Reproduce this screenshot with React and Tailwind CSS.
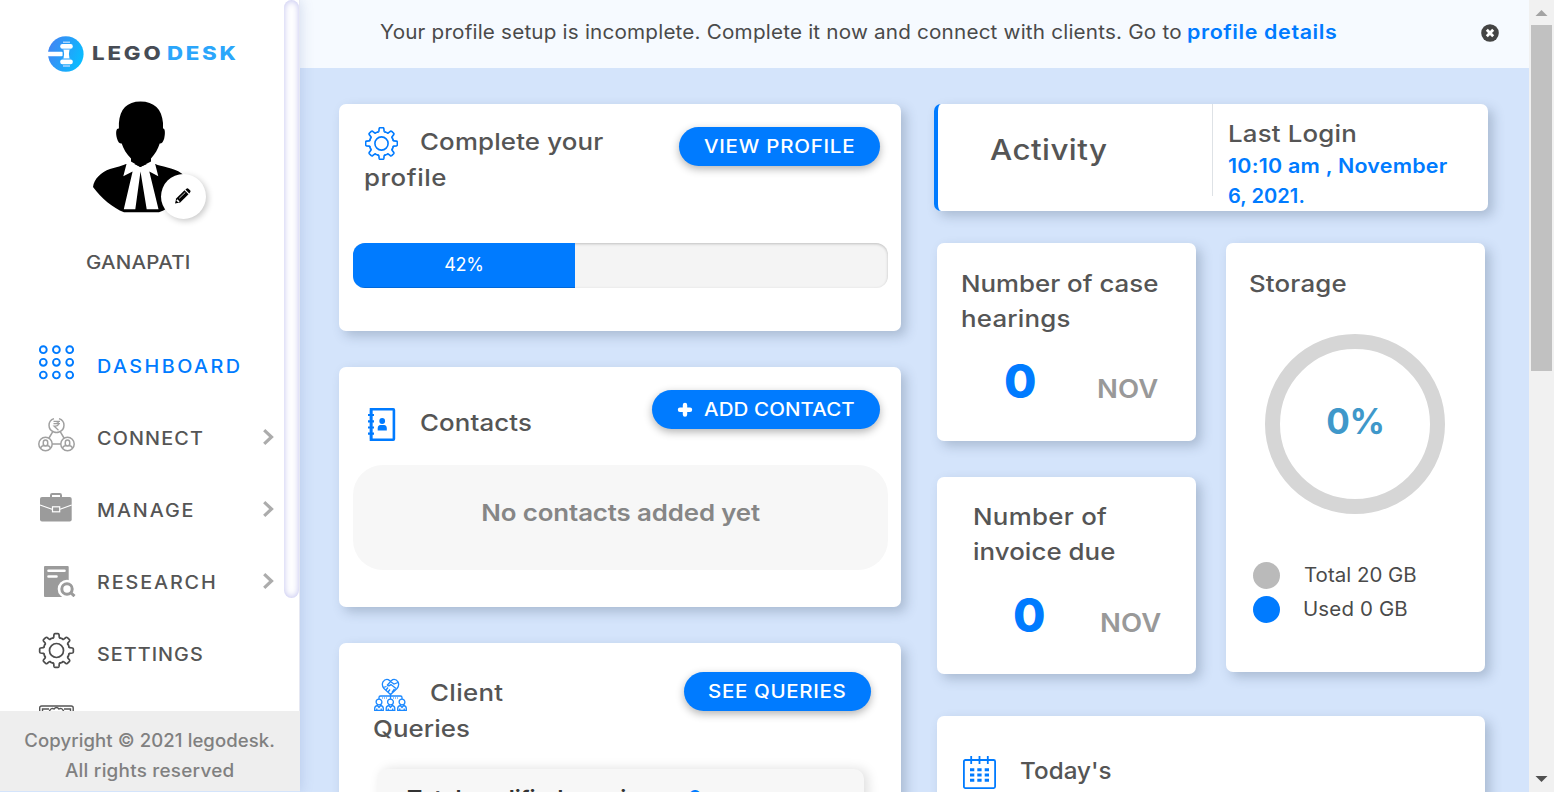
import React from "react";

const gearPath = (cx, cy, r, ri) => {
  const pts = [];
  const at = (deg, rad) => {
    const a = ((deg - 90) * Math.PI) / 180;
    return `${(cx + rad * Math.cos(a)).toFixed(2)} ${(cy + rad * Math.sin(a)).toFixed(2)}`;
  };
  for (let k = 0; k < 8; k++) {
    const c = k * 45;
    pts.push(`${k ? "L" : "M"}${at(c - 12, ri + 0.6)}`);
    pts.push(`L${at(c - 9, r - 0.8)} Q${at(c - 8, r)} ${at(c - 5, r)}`);
    pts.push(`L${at(c + 5, r)} Q${at(c + 8, r)} ${at(c + 9, r - 0.8)}`);
    pts.push(`L${at(c + 12, ri + 0.6)} Q${at(c + 16, ri - 0.6)} ${at(c + 19, ri + 0.3)}`);
    pts.push(`Q${at(c + 22.5, ri - 0.2)} ${at(c + 26, ri + 0.3)} Q${at(c + 29, ri - 0.6)} ${at(c + 33, ri + 0.6)}`);
  }
  return pts.join(" ") + "Z";
};

const Gear = ({ size, r, ri, hole, stroke, className }) => (
  <svg width={size} height={size} className={className} fill="none" stroke="currentColor" strokeWidth={stroke} strokeLinejoin="round">
    <path d={gearPath(size / 2, size / 2, r, ri)} />
    <circle cx={size / 2} cy={size / 2} r={hole} />
  </svg>
);

const LogoMark = () => (
  <svg width="36" height="36" viewBox="0 0 36 36" className="shrink-0">
    <defs>
      <linearGradient id="lg" x1="0" x2="1" y1="0.2" y2="0.6">
        <stop offset="0" stopColor="#4383f3" />
        <stop offset="1" stopColor="#08bdff" />
      </linearGradient>
    </defs>
    <circle cx="17.8" cy="18" r="17.8" fill="url(#lg)" />
    <path d="M0 15.7h13.6a1 1 0 0 1 1 1v2.6a1 1 0 0 1-1 1H0z" fill="#fff" />
    <rect x="12.2" y="8" width="12.6" height="4.8" rx="2.2" fill="#fff" />
    <rect x="12.2" y="23.4" width="12.6" height="4.8" rx="2.2" fill="#fff" />
    <path d="M15.5 13.6h6l-.6 4.4.6 4.6h-6l.6-4.6z" fill="#fff" />
    <path d="M15 6.3h7M15 30h7" stroke="#a9d5ff" strokeWidth="1.5" />
    <path d="M14.5 13.2h8M14.5 23h8" stroke="#8cc8ff" strokeWidth=".7" />
  </svg>
);

const Avatar = () => (
  <svg width="96" height="112" viewBox="0 0 96 112">
    <path d="M33 63C26 66 22 66.500 17 68C8 71 1 78 0 86C8 97 20 107 31 111.300H66C78 107 88 97 95 86C94 80 92 75 88.700 72.500C80 66 68 66 62.300 63z" />
    <path d="M35.300 60 47.300 66 60 60.300 62.300 63.500 65.300 75.300 56.300 70.500 65.500 108.300H53.700L47.500 70.500 42.300 108.300H30.800L39.600 70.500 30.300 75.300 33.500 63z" fill="#fff" />
    <path d="M47.500.4C34 .4 27 8 25.900 22V27.500C23 27 22.500 32 24 37.500C25 41.500 26.800 42.700 28.700 42.500C30.500 48 33.500 53 38 57.500V60.500L47.300 66 58 60.500V57.500C62 53 65 48 66.700 42.500C68.500 42.700 70 41.500 71.200 37.500C72.500 32 72 27 70 27.500V22C69 8 61 .4 47.500.4z" />
  </svg>
);

const Pencil = () => (
  <svg width="16" height="16" viewBox="0 0 16 16" className="-mt-[2px] -ml-[1px]">
    <path d="M0 15.500 1.200 10.600 9.500 2.300 13.500 6.300 5.200 14.400z" />
    <path d="M10.400 1.500 11.800.4Q12.700 0 13.400.7L15.300 2.600Q15.900 3.300 15.300 4.100L14.300 5.400z" />
    <path d="M1.900 11.900 4 14" stroke="#fff" strokeWidth="1.600" />
    <path d="M4.200 10.300 10.300 4.400" stroke="#fff" strokeWidth=".8" />
  </svg>
);

const DashboardIcon = () => (
  <svg width="38" height="38" fill="none" stroke="#007bff" strokeWidth="1.900">
    {[6.7, 19.3, 32].map((y) => [5.3, 18.4, 31.700].map((x) => <circle key={x + y * 50} cx={x} cy={y} r="3.400" />))}
  </svg>
);

const Person = ({ x, y }) => (
  <g transform={`translate(${x} ${y})`}>
    <path d="M-2.200 1.500V-1.500a2.200 2.200 0 0 1 4.400 0V1.500M-4.600 4.800V3.600Q-4 2.200-1.300 1.700Q0 3 1.300 1.700Q4 2.200 4.600 3.600V4.800" />
  </g>
);

const ConnectIcon = () => (
  <svg width="38" height="38" fill="none" stroke="#a0a0a0" strokeWidth="1.500">
    <path d="M16 3.600A7 7 0 0 0 16 17M21 3.600A7 7 0 0 1 21 17M16 17Q18.500 18 21 17" />
    <path d="M15.500 6.300h6.500M15.500 8.700h6.500M15.500 6.300h2q3 .2 3 2.400t-3 2.300h-1.500l4.500 4.300" strokeWidth="1.200" />
    <circle cx="7.500" cy="29" r="6.700" />
    <circle cx="29.500" cy="29" r="6.700" />
    <path d="M14.200 29h8.600M11 23 14.800 16.600M26 23 22.200 16.600" />
    <Person x={7.500} y={28.700} />
    <Person x={29.500} y={28.700} />
  </svg>
);

const ManageIcon = () => (
  <svg width="38" height="38">
    <path d="M13 11V8.200Q13 7 14.200 7H21.800Q23 7 23 8.200V11" fill="none" stroke="#9b9b9b" strokeWidth="2" />
    <rect x="2" y="10" width="31.700" height="24.500" rx="2" fill="#9b9b9b" />
    <path d="M2 18 14 22.300M22 22.300 33.700 18" stroke="#fff" strokeWidth="1.200" />
    <rect x="14.500" y="19.800" width="7.200" height="5" fill="#9b9b9b" stroke="#fff" strokeWidth="1.200" />
  </svg>
);

const ResearchIcon = () => (
  <svg width="38" height="38">
    <path d="M7 7H29.700Q30.700 7 30.700 8V38H7Q6 38 6 37V8Q6 7 7 7z" fill="#9b9b9b" />
    <path d="M10.500 11.700H26.500M10.500 17.500H18.500" stroke="#fff" strokeWidth="2.600" strokeLinecap="round" />
    <circle cx="29" cy="30" r="9.300" fill="#fff" />
    <path d="M29 39H39V29z" fill="#fff" />
    <circle cx="29" cy="30" r="5.200" fill="none" stroke="#9b9b9b" strokeWidth="3" />
    <path d="M32.500 33.500 36.500 37.200" stroke="#9b9b9b" strokeWidth="3" />
  </svg>
);

const CertificateIcon = () => (
  <svg width="38" height="38" fill="none" stroke="#555" strokeWidth="1.400">
    <rect x="1.700" y="3" width="33.500" height="26" rx="2" />
    <path d="M4.500 9V6H11M32.500 9V6H26M11 9Q13 4 16 6Q18.500 3 21 6Q24 4 26 9" />
  </svg>
);

const nav = [
  { label: "DASHBOARD", icon: <DashboardIcon />, text: "text-[#007bff] tracking-[2.200px]" },
  { label: "CONNECT", icon: <ConnectIcon />, arrow: true, text: "text-[#555] tracking-[1.030px]" },
  { label: "MANAGE", icon: <ManageIcon />, arrow: true, text: "text-[#555] tracking-[1.700px]" },
  { label: "RESEARCH", icon: <ResearchIcon />, arrow: true, text: "text-[#555] tracking-[1.700px]" },
  { label: "SETTINGS", icon: <Gear size={37} r={16.900} ri={12.900} hole={7} stroke={1.700} />, text: "text-[#555] tracking-[0.930px]" },
];

const Sidebar = () => (
  <aside className="relative z-10 flex h-[792px] w-[300px] shrink-0 flex-col bg-white shadow-[1px_0_12px_rgba(60,90,160,0.18)]">
    <div className="flex h-[711px] overflow-hidden border-r border-[#e6e8f2]">
      <div className="flex w-[284px] shrink-0 flex-col">
        <div className="mt-[36px] flex h-[36px] items-center pl-[48px]">
          <LogoMark />
          <div className="-mt-[2px] ml-[8px] flex text-[18.500px] font-extrabold leading-5">
            <span className="w-[75px] origin-left scale-x-120 tracking-[2.400px] text-[#474c55]">LEGO</span>
            <span className="origin-left scale-x-120 tracking-[2.270px] text-[#2ba6fb]">DESK</span>
          </div>
        </div>
        <div className="mt-[29px] flex h-[120px] pl-[93px]">
          <Avatar />
          <div className="-ml-[28px] mt-[73px] flex h-[45px] w-[45px] shrink-0 items-center justify-center rounded-full bg-white shadow-[2px_2px_6px_rgba(0,0,0,0.22)]">
            <Pencil />
          </div>
        </div>
        <div className="mt-[29px] h-[30px] pl-[86px] text-[18px] font-medium leading-[30px] text-[#555]">
          <span className="inline-block origin-left scale-x-114 tracking-[0.200px]">GANAPATI</span>
        </div>
        <nav className="mt-[52px] flex flex-col">
          {nav.map((n) => (
            <div key={n.label} className="flex h-[72px] items-center pl-[38px] pr-[10px]">
              <div className="mb-[8px] w-[38px] shrink-0 text-[#4d4d4d]">{n.icon}</div>
              <span className={`ml-[21px] origin-left scale-x-110 text-[18px] font-medium ${n.text}`}>{n.label}</span>
              {n.arrow && (
                <svg width="11" height="16" className="mb-[3px] ml-auto shrink-0" fill="none" stroke="#acacac" strokeWidth="3.200">
                  <path d="M1.200 1.200 8.500 8 1.200 14.800" />
                </svg>
              )}
            </div>
          ))}
          <div className="mt-[13px] pl-[38px]"><CertificateIcon /></div>
        </nav>
      </div>
      <div className="h-[598px] w-[15px] shrink-0 rounded-[8px] bg-white shadow-[inset_0_0_7px_#bfbfee]" />
    </div>
    <footer className="flex h-[80px] flex-col items-center bg-[#eee] pt-[15px] text-[18px] font-medium leading-[30px] text-[#808080]">
      <div className="scale-x-103 tracking-[0.080px]">Copyright © 2021 legodesk.</div>
      <div className="scale-x-105 tracking-[0.220px]">All rights reserved</div>
    </footer>
    <div className="h-px bg-[#d4e4fb]" />
  </aside>
);

const card = "rounded-[7px] bg-white shadow-[5px_5px_12px_rgba(45,65,90,0.25)]";
const h = "origin-left scale-x-110 whitespace-nowrap text-[23.500px] font-medium text-[#555]";
const pill = "flex h-[39px] items-center rounded-full bg-[#007bff] whitespace-nowrap text-[18px] font-medium text-white shadow-[0_3px_8px_rgba(0,0,0,0.3)]";

const BookIcon = () => (
  <svg width="28" height="33" viewBox="0 0 28 33">
    <rect x="3.200" y="1.300" width="22.700" height="30.400" rx=".6" fill="none" stroke="#007bff" strokeWidth="2.600" />
    <path d="M3 0V33" stroke="#007bff" strokeWidth="2.600" />
    <path d="M0 7H6M0 13.300H6M0 19.500H6M0 25.700H6" stroke="#007bff" strokeWidth="2.200" />
    <circle cx="14.200" cy="13" r="2.900" fill="#007bff" />
    <path d="M9.700 22.500V20.500Q9.700 17 12.500 17H16Q18.800 17 18.800 20.500V22.500z" fill="#007bff" />
  </svg>
);

const ClientsIcon = () => (
  <svg width="33" height="33" viewBox="0 0 33 33" className="mt-[3px]" fill="none" stroke="#1a88ff" strokeWidth="1.300">
    <path d="M16.500 16.500 10 10.500Q7.300 7.300 9 3.800Q11 .7 14.300 1.600L16.500 3.200 18.700 1.600Q22 .7 24 3.800Q25.700 7.300 23 10.500z" />
    <path d="M9 9.500 12.500 8.500M13 7.500 16.500 3.500 20 6 24 4.500M13 7.500Q15 8.500 17 6.500L22 10.500M12 12l2-2.500M14 14l2-2.500M18 14.500l2.500-3.500" />
    <path d="M16.500 16V21M5 21V19.500Q5 18 6.500 18H26.500Q28 18 28 19.500V21" />
    <path d="M8 20H14M19 20H25" strokeDasharray="1 1" strokeWidth="1.200" />
    {[5, 16.500, 28].map((x) => (
      <g key={x} transform={`translate(${x} 0)`}>
        <circle cx="0" cy="24" r="2.900" />
        <path d="M-4.300 32.300V30.500Q-4.300 28-1.600 27.500L0 29.500 1.600 27.500Q4.300 28 4.300 30.500V32.300zM-2.200 32V30.500M2.200 32V30.500" />
      </g>
    ))}
  </svg>
);

const CalendarIcon = () => (
  <svg width="33" height="33" viewBox="0 0 33 33" fill="none" stroke="#007bff">
    <rect x=".9" y="4" width="31.200" height="28.100" rx="1.500" strokeWidth="1.800" />
    <path d="M8.200 0V8M16.500 0V8M24.800 0V8" strokeWidth="1.800" />
    <path d="M7 13.800H11.300M14.300 13.800H18.600M21.700 13.800H26M7 19H11.300M14.300 19H18.600M21.700 19H26M7 24.200H11.300M14.300 24.200H18.600M21.700 24.200H26" strokeWidth="3" />
  </svg>
);

const LeftColumn = () => (
  <div className="flex w-[562px] shrink-0 flex-col gap-[36px]">
    <section className={`${card} h-[227px] shrink-0 pl-[14px] pr-[13px]`}>
      <div className="flex h-[139px] justify-between pl-[12px] pr-[8px]">
        <div className="pt-[20px] leading-[36px]">
          <div className="flex">
            <Gear size={33} r={15.900} ri={12} hole={6.600} stroke={1.600} className="mt-[3px] text-[#007bff]" />
            <span className={`${h} ml-[22px] tracking-[0.140px]`}>Complete your</span>
          </div>
          <div className={`${h} -ml-px tracking-[0.500px]`}>profile</div>
        </div>
        <button className={`${pill} mt-[23px] w-[201px] pl-[25px]`}>
          <span className="origin-left scale-x-114 tracking-[0.650px]">VIEW PROFILE</span>
        </button>
      </div>
      <div className="h-[45px] overflow-hidden rounded-[12px] bg-[#f4f4f4] shadow-[inset_0_1px_3px_rgba(0,0,0,0.22)]">
        <div className="flex h-full w-[222px] items-center justify-center bg-[#007bff] pb-[2px] text-[18px] tracking-[-0.300px] text-white shadow-[inset_0_-1px_0_rgba(0,0,0,0.15)]">42%</div>
      </div>
    </section>

    <section className={`${card} h-[240px] shrink-0 pl-[14px] pr-[13px]`}>
      <div className="flex h-[98px] justify-between pl-[15px] pr-[8px]">
        <div className="flex pt-[41px]">
          <BookIcon />
          <span className={`${h} -mt-[3px] ml-[24px] h-[36px] leading-[36px] tracking-[0.090px]`}>Contacts</span>
        </div>
        <button className={`${pill} mt-[23px] w-[228px] pl-[25px]`}>
          <svg width="16" height="16" className="mr-[11px]" stroke="#fff" strokeWidth="4.400" strokeLinecap="round">
            <path d="M8 3V12.600M3 7.800H13" />
          </svg>
          <span className="origin-left scale-x-114 tracking-[0.080px]">ADD CONTACT</span>
        </button>
      </div>
      <div className="flex h-[105px] justify-center rounded-[30px] bg-[#f7f7f7] pt-[30px]">
        <span className="scale-x-110 whitespace-nowrap text-[23.500px] font-semibold leading-[36px] tracking-[-0.120px] text-[#868686]">No contacts added yet</span>
      </div>
    </section>

    <section className={`${card} h-[260px] shrink-0 pl-[35px]`}>
      <div className="flex h-[126px] justify-between pr-[30px]">
        <div className="pt-[32px] leading-[36px]">
          <div className="flex">
            <ClientsIcon />
            <span className={`${h} ml-[23px] tracking-[0.300px]`}>Client</span>
          </div>
          <div className={`${h} -ml-px tracking-[0.050px]`}>Queries</div>
        </div>
        <button className={`${pill} mt-[29px] w-[187px] pl-[24px]`}>
          <span className="origin-left scale-x-114 tracking-[0.560px]">SEE QUERIES</span>
        </button>
      </div>
      <div className="ml-[3px] h-[120px] w-[487px] rounded-[10px] bg-[#f7f7f7] pl-[30px] pt-[12px] shadow-[4px_0_12px_rgba(0,0,0,0.13)]">
        <div className="flex text-[21px] font-semibold leading-[36px] text-[#333]">
          <span className="w-[281px] origin-left scale-x-110 whitespace-nowrap tracking-[-0.100px]">Total qualified queries</span>
          <span className="text-[#007bff]">0</span>
        </div>
      </div>
    </section>
  </div>
);

const Count = ({ gap, children }) => (
  <>
    <span className={`${gap} text-[47px] font-extrabold leading-[60px] text-[#007bff]`}>{children}</span>
    <span className="h-[44px] origin-left scale-x-110 pt-[16px] text-[25px] font-semibold leading-[44px] tracking-[0.150px] text-[#999]">NOV</span>
  </>
);

const RightColumn = () => (
  <div className="flex w-[554px] shrink-0 flex-col">
    <section className={`${card} flex h-[107px] shrink-0 border-l-4 border-[#007bff]`}>
      <div className="h-[92px] w-[275px] border-r border-[#dee2e6] pl-[52px] text-[28.500px] font-medium leading-[92px] text-[#555]">
        <span className="inline-block origin-left scale-x-110 tracking-[0.400px]">Activity</span>
      </div>
      <div className="pl-[15px] pt-[12px]">
        <div className={`${h} h-[35px] leading-[35px] tracking-[0.150px]`}>Last Login</div>
        <div className="whitespace-nowrap text-[19.500px] font-semibold leading-[30px] text-[#007bff]">
          <div className="origin-left scale-x-110 tracking-[0.200px]">10:10 am , November</div>
          <div className="origin-left scale-x-103 tracking-[0.050px]">6, 2021.</div>
        </div>
      </div>
    </section>
    <div className="mt-[32px] flex gap-[30px] pl-[3px]">
      <div className="flex w-[259px] flex-col gap-[36px]">
        <section className={`${card} h-[198px] pl-[24px] pt-[23px]`}>
          <div className={`${h} leading-[35px]`}>Number of case</div>
          <div className={`${h} leading-[35px] tracking-[0.200px]`}>hearings</div>
          <div className="flex pl-[43px] pt-[15px]">
            <Count gap="w-[93px]">0</Count>
          </div>
        </section>
        <section className={`${card} h-[197px] pl-[36px] pt-[22px]`}>
          <div className={`${h} leading-[35px] tracking-[0.270px]`}>Number of</div>
          <div className={`${h} leading-[35px] tracking-[0.050px]`}>invoice due</div>
          <div className="flex pl-[40px] pt-[16px]">
            <Count gap="w-[87px]">0</Count>
          </div>
        </section>
      </div>
      <section className={`${card} flex h-[429px] w-[259px] flex-col`}>
        <div className={`${h} ml-[23px] pt-[23px] leading-[35px] tracking-[0.150px]`}>Storage</div>
        <div className="ml-[39px] mt-[33px] flex h-[180px] w-[180px] items-center justify-center rounded-full border-[15px] border-[#d6d6d6] pb-[6px] pl-px text-[35px] font-bold tracking-[-0.200px] text-[#3f98ca]">0%</div>
        <div className="mt-[44px] flex flex-col pl-[27px] text-[19.500px] text-[#4a4a4a]">
          <div className="flex h-[34px] items-center">
            <span className="mr-[24px] h-[27px] w-[27px] rounded-full bg-[#bababa]" />
            <span className="mt-[2px] origin-left scale-x-105">Total 20 GB</span>
          </div>
          <div className="flex h-[34px] items-center">
            <span className="mr-[23px] h-[27px] w-[27px] rounded-full bg-[#007bff]" />
            <span className="mt-[2px] origin-left scale-x-105 tracking-[0.130px]">Used 0 GB</span>
          </div>
        </div>
      </section>
    </div>
    <section className={`${card} ml-[3px] mt-[42px] flex h-[200px] w-[548px] shrink-0 pl-[26px] pt-[40px]`}>
      <CalendarIcon />
      <span className="-mt-[3px] ml-[24px] origin-left scale-x-103 text-[23.500px] font-medium leading-[36px] tracking-[0.050px] text-[#555]">Today's</span>
    </section>
  </div>
);

const PageScrollbar = () => (
  <div className="flex h-[792px] w-[25px] shrink-0 flex-col items-center justify-between bg-[#f1f1f1]">
    <svg width="25" height="25"><path d="M6.500 16 12.500 10 18.500 16z" fill="#a3a3a3" /></svg>
    <div className="h-[346px] w-[21px] bg-[#c1c1c1]" />
    <div className="grow" />
    <svg width="25" height="25"><path d="M6.500 9 12.500 15 18.500 9z" fill="#505050" /></svg>
  </div>
);

export default function App() {
  return (
    <div className="flex h-[792px] w-[1554px] overflow-hidden bg-[#d4e4fb] font-['Inter',sans-serif]">
      <Sidebar />
      <main className="flex h-[792px] w-[1229px] shrink-0 flex-col overflow-hidden">
        <div className="flex h-[68px] shrink-0 items-center bg-[#f6faff] pb-[2px] pl-[80px] pr-[30px] text-[19.500px]">
          <span className="w-[807px] shrink-0 origin-left scale-x-106 whitespace-nowrap tracking-[0.175px] text-[#4a4a4a]">
            Your profile setup is incomplete. Complete it now and connect with clients. Go to
          </span>
          <a className="origin-left scale-x-110 whitespace-nowrap font-semibold tracking-[0.550px] text-[#007bff]">profile details</a>
          <svg width="18" height="18" viewBox="0 0 18 18" className="ml-auto">
            <circle cx="9" cy="9" r="8.800" fill="#444" />
            <path d="M5.800 5.800 12.200 12.200M12.200 5.800 5.800 12.200" stroke="#fff" strokeWidth="2.800" />
          </svg>
        </div>
        <div className="flex items-start gap-[33px] pl-[39px] pt-[36px]">
          <LeftColumn />
          <RightColumn />
        </div>
      </main>
      <PageScrollbar />
    </div>
  );
}
